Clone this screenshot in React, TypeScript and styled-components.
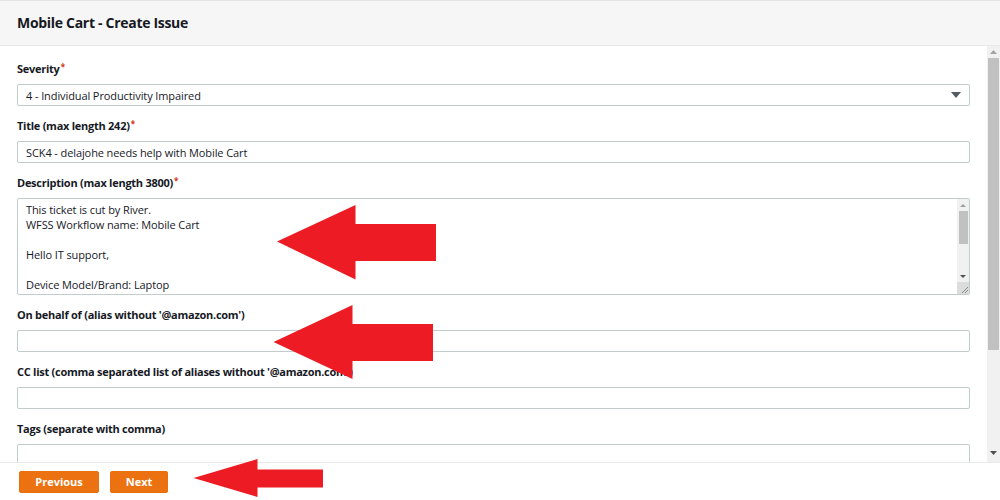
import React from "react";
import styled, { createGlobalStyle } from "styled-components";

const Global = createGlobalStyle`
  html, body { margin: 0; padding: 0; background: #fff; }
  body { font-family: "Open Sans", "Liberation Sans", sans-serif; color: #16191f; }
  * { box-sizing: border-box; }
`;

const Page = styled.div`
  position: relative;
  width: 1000px;
  height: 500px;
  display: flex;
  flex-direction: column;
  overflow: hidden;
`;

const Header = styled.div`
  height: 46px;
  flex: none;
  display: flex;
  align-items: center;
  padding-left: 17px;
  background: #f6f6f6;
  border-top: 1px solid #e4e6e6;
  border-bottom: 1px solid #e8eaea;
`;

const Title = styled.h1`
  margin: 0 0 1px 0;
  font-size: 14px;
  font-weight: 700;
  letter-spacing: -0.3px;
  color: #16191f;
`;

const Body = styled.div`
  flex: 1;
  display: flex;
  min-height: 0;
`;

const Content = styled.div`
  flex: 1;
  padding: 15px 17px 0 17px;
  display: flex;
  flex-direction: column;
  gap: 12px;
  overflow: hidden;
`;

const Field = styled.div`
  display: flex;
  flex-direction: column;
  gap: 7px;
  flex: none;
`;

const Label = styled.label`
  font-size: 11px;
  font-weight: 700;
  line-height: 16px;
  letter-spacing: -0.26px;
  color: #16191f;
`;

const Req = styled.span`
  color: #d13212;
  font-size: 8px;
  vertical-align: top;
  line-height: 12px;
  margin-left: 1px;
`;

const Box = styled.div`
  height: 22px;
  border: 1px solid #c3cccc;
  border-radius: 2px;
  background: #fff;
  display: flex;
  align-items: center;
  padding: 0 8px;
  font-size: 11px;
  letter-spacing: -0.1px;
  color: #16191f;
`;

const SelectBox = styled(Box)`
  justify-content: space-between;
  padding-right: 8px;
`;

const TextArea = styled.div`
  height: 97px;
  border: 1px solid #c3cccc;
  border-radius: 2px;
  display: flex;
  overflow: hidden;
`;

const TextContent = styled.div`
  flex: 1;
  padding: 3px 8px;
  font-size: 11px;
  line-height: 15px;
  letter-spacing: -0.1px;
  color: #16191f;
  white-space: pre;
`;

const MiniScroll = styled.div`
  width: 12px;
  background: #f1f1f1;
  display: flex;
  flex-direction: column;
  align-items: center;
`;

const Arrow = styled.div<{ $h: number }>`
  height: ${(p) => p.$h}px;
  width: 100%;
  flex: none;
  display: flex;
  align-items: center;
  justify-content: center;
`;

const Thumb = styled.div<{ $h: number; $w: number }>`
  height: ${(p) => p.$h}px;
  width: ${(p) => p.$w}px;
  background: #c1c1c1;
  flex: none;
`;

const Spacer = styled.div`
  flex: 1;
`;

const Grip = styled.div`
  height: 12px;
  width: 100%;
  background: #dcdcdc;
  display: flex;
  align-items: flex-end;
  justify-content: flex-end;
`;

const PageScroll = styled.div`
  width: 13px;
  flex: none;
  background: #f1f1f1;
  display: flex;
  flex-direction: column;
  align-items: center;
`;

const Footer = styled.div`
  height: 38px;
  flex: none;
  border-top: 1px solid #e8eaea;
  display: flex;
  align-items: center;
  gap: 11px;
  padding-left: 19px;
`;

const Button = styled.button<{ $w: number }>`
  width: ${(p) => p.$w}px;
  height: 22px;
  background: #ec7211;
  border: 1px solid #eb6f0c;
  border-radius: 2px;
  color: #fff;
  font-family: "Open Sans", "Liberation Sans", sans-serif;
  font-size: 11px;
  font-weight: 700;
  padding: 0;
`;

const Overlay = styled.svg`
  position: absolute;
  left: 0;
  top: 0;
  pointer-events: none;
`;

const Tri = ({ up, w = 7, h = 4, color = "#505050" }: { up?: boolean; w?: number; h?: number; color?: string }) => (
  <svg width={w} height={h} viewBox={`0 0 ${w} ${h}`}>
    <polygon points={up ? `0,${h} ${w},${h} ${w / 2},0` : `0,0 ${w},0 ${w / 2},${h}`} fill={color} />
  </svg>
);

const desc = `This ticket is cut by River.
WFSS Workflow name: Mobile Cart

Hello IT support,

Device Model/Brand: Laptop`;

export default function App() {
  return (
    <Page>
      <Global />
      <Header>
        <Title>Mobile Cart - Create Issue</Title>
      </Header>
      <Body>
        <Content>
          <Field>
            <Label>
              Severity<Req>*</Req>
            </Label>
            <SelectBox>
              <span>4 - Individual Productivity Impaired</span>
              <Tri w={10} h={6} color="#545b64" />
            </SelectBox>
          </Field>
          <Field>
            <Label>
              Title (max length 242)<Req>*</Req>
            </Label>
            <Box>SCK4 - delajohe needs help with Mobile Cart</Box>
          </Field>
          <Field>
            <Label>
              Description (max length 3800)<Req>*</Req>
            </Label>
            <TextArea>
              <TextContent>{desc}</TextContent>
              <MiniScroll>
                <Arrow $h={12}>
                  <Tri up w={6} h={3} color="#a0a0a0" />
                </Arrow>
                <Thumb $h={33} $w={9} />
                <Spacer />
                <Arrow $h={12}>
                  <Tri w={6} h={3} color="#505050" />
                </Arrow>
                <Grip>
                  <svg width="10" height="10" viewBox="0 0 10 10">
                    <path d="M9 3 L3 9 M9 6 L6 9" stroke="#8a8a8a" strokeWidth="1" />
                  </svg>
                </Grip>
              </MiniScroll>
            </TextArea>
          </Field>
          <Field>
            <Label>On behalf of (alias without '@amazon.com')</Label>
            <Box />
          </Field>
          <Field>
            <Label>CC list (comma separated list of aliases without '@amazon.com')</Label>
            <Box />
          </Field>
          <Field>
            <Label>Tags (separate with comma)</Label>
            <Box />
          </Field>
        </Content>
        <PageScroll>
          <Arrow $h={12}>
            <Tri up w={7} h={4} color="#a3a3a3" />
          </Arrow>
          <Thumb $h={292} $w={11} />
          <Spacer />
          <Arrow $h={18}>
            <Tri w={7} h={4} color="#505050" />
          </Arrow>
        </PageScroll>
      </Body>
      <Footer>
        <Button $w={80}>Previous</Button>
        <Button $w={58}>Next</Button>
      </Footer>
      <Overlay width={1000} height={500} viewBox="0 0 1000 500">
        <polygon
          fill="#ed1c24"
          points="277,241.5 355.5,205 355.5,224 436,224 436,261 355.5,261 355.5,279.5"
        />
        <polygon
          fill="#ed1c24"
          points="273.5,342 352.5,305 352.5,324 433,324 433,361 352.5,361 352.5,379"
        />
        <polygon
          fill="#ed1c24"
          points="193.5,478 257.5,459 257.5,469.5 323,469.5 323,487.5 257.5,487.5 257.5,497"
        />
      </Overlay>
    </Page>
  );
}
